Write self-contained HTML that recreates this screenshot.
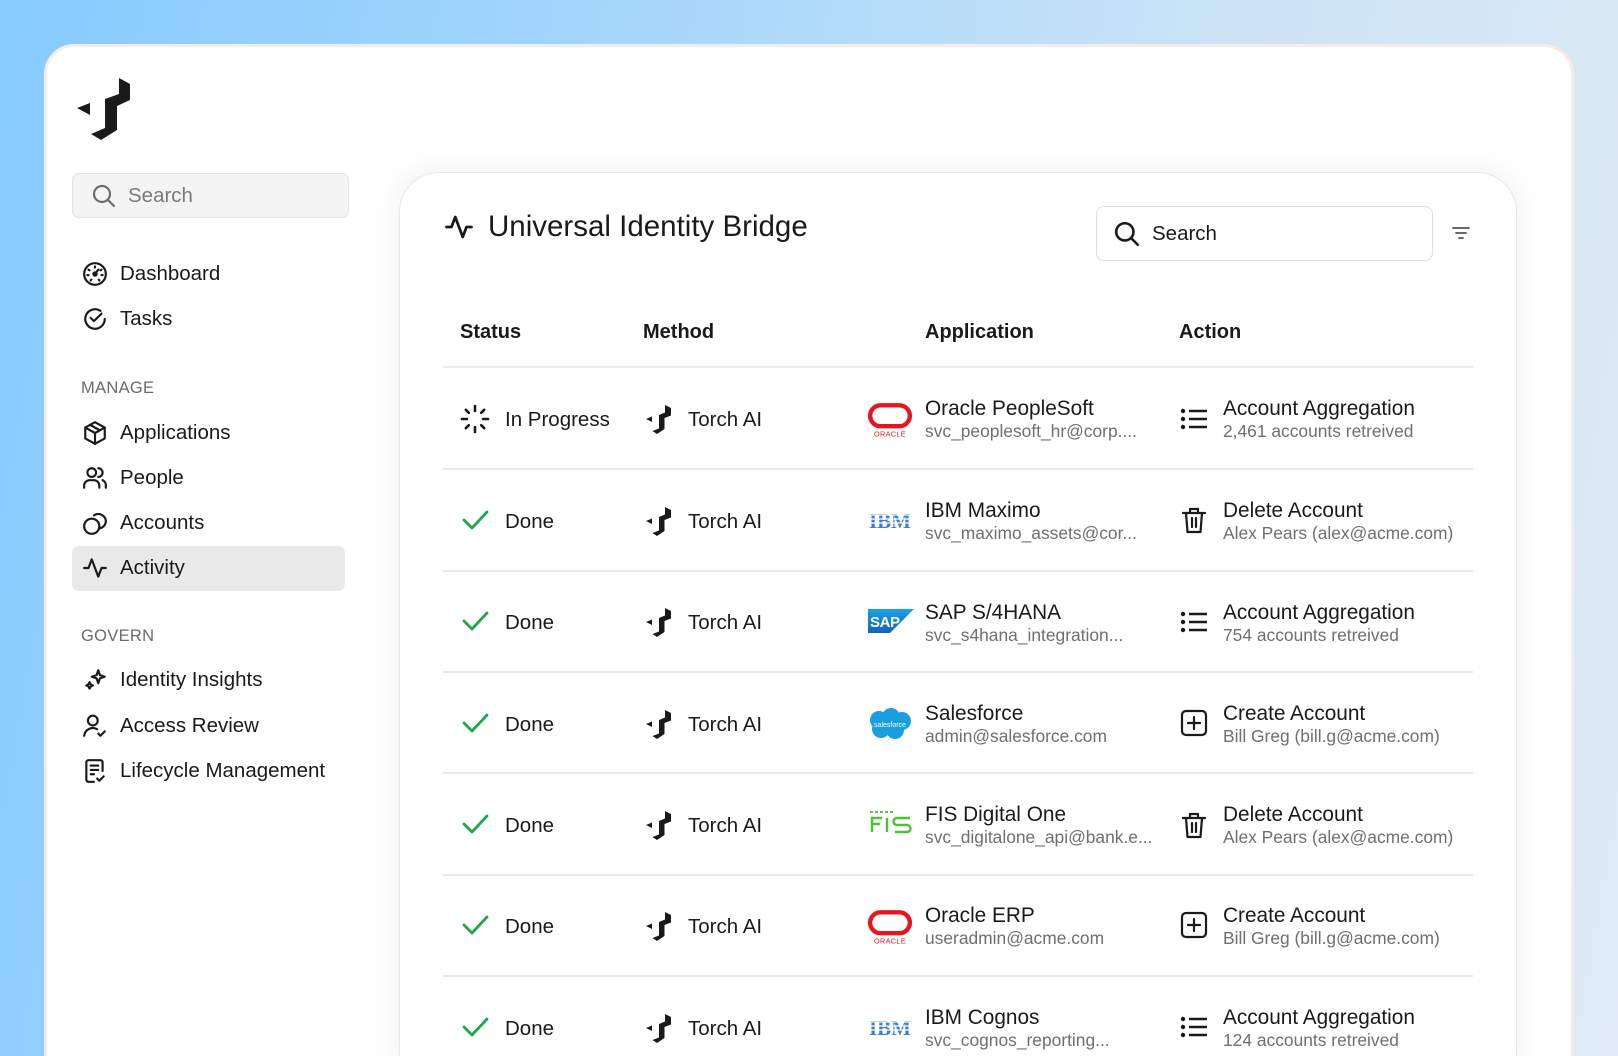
<!DOCTYPE html>
<html><head><meta charset="utf-8">
<style>
*{margin:0;padding:0;box-sizing:border-box}
html,body{width:1618px;height:1056px;overflow:hidden}
body{font-family:"Liberation Sans",sans-serif;color:#1a1a1a;position:relative;
background:linear-gradient(100deg,#86cbff 0%,#a5d6fb 35%,#cde4f6 70%,#dfeaf4 100%);}
.card{position:absolute;left:44px;top:44px;width:1530px;height:1012px;background:#fff;border:3px solid #f5ebe7;border-bottom:none;border-radius:30px 30px 0 0}
.abs{position:absolute}
.nav{position:absolute;left:82px;display:flex;align-items:center;font-size:20.5px;height:30px}
.nav svg{width:26px;height:26px;margin-right:12px;fill:none;stroke:#1a1a1a;stroke-width:2;stroke-linecap:round;stroke-linejoin:round}
.sec{position:absolute;left:81px;font-size:16.5px;color:#6b6b6b;letter-spacing:.3px}
.panel{position:absolute;left:399px;top:172px;width:1118px;height:884px;background:#fff;border:1px solid #e8e8e8;border-bottom:none;border-radius:40px 40px 0 0;box-shadow:0 0 22px 10px rgba(0,0,0,.035)}
.hdr{position:absolute;top:321px;font-size:20px;font-weight:bold}
.div{position:absolute;left:443px;width:1030px;height:2px;background:#e9e9e9}
.cell{position:absolute;display:flex;align-items:center;font-size:20.5px}
.two{position:absolute;line-height:1}
.two .a{font-size:20.8px;color:#1a1a1a}
.two .b{font-size:17.4px;color:#6f6f6f;margin-top:3px}
.ic{fill:none;stroke:#1a1a1a;stroke-width:2.2;stroke-linecap:round;stroke-linejoin:round}
</style></head><body>
<div class="card"></div>
<svg class="abs" style="left:77px;top:78px" width="54" height="63" viewBox="0 0 54 63"><polygon fill="#1a1a1a" points="0,30 13,25 13,37"/><polygon fill="#1a1a1a" points="42,0 53,6 53,22 40,28 40,52 24,62 14,56 28,50 28,21 42,16"/></svg>
<div class="abs" style="left:72px;top:173px;width:277px;height:45px;background:#f4f4f4;border:1px solid #e3e3e3;border-radius:7px"></div>
<svg class="abs" style="left:91px;top:183px" width="26" height="26" viewBox="0 0 26 26"><circle cx="11" cy="11" r="8" fill="none" stroke="#6e6e6e" stroke-width="2.2"/><path d="M17 17l6 6" stroke="#6e6e6e" stroke-width="2.2" stroke-linecap="round"/></svg>
<div class="abs" style="left:128px;top:184px;font-size:20.5px;color:#7a7a7a">Search</div>

<div class="nav" style="top:259px"><svg viewBox="0 0 24 24"><circle cx="12" cy="12" r="10"/><path d="M12 12l3-4M12 5v1M6 8l1 .6M18 8l-1 .6M5 13h1M18 13h1M8 18l.6-.8M16 18l-.6-.8"/><circle cx="12" cy="12" r="1.5" fill="#1a1a1a"/></svg>Dashboard</div>
<div class="nav" style="top:304px"><svg viewBox="0 0 24 24"><path d="M21 12a9 9 0 1 1-4-7.5"/><path d="M8 11l3 3 7-7"/></svg>Tasks</div>
<div class="sec" style="top:379px">MANAGE</div>
<div class="nav" style="top:418px"><svg viewBox="0 0 24 24"><path d="M12 2l9 5v10l-9 5-9-5V7z"/><path d="M3 7l9 5 9-5M12 12v10M7.5 4.5l9 5"/></svg>Applications</div>
<div class="nav" style="top:463px"><svg viewBox="0 0 24 24"><circle cx="9" cy="7" r="4"/><path d="M2 21v-2a5 5 0 0 1 5-5h4a5 5 0 0 1 5 5v2M15 3a4 4 0 0 1 0 8M19 14a5 5 0 0 1 3 5v2"/></svg>People</div>
<div class="nav" style="top:508px"><svg viewBox="0 0 24 24"><circle cx="9" cy="15" r="7"/><path d="M11 5a7 7 0 0 1 11 6 7 7 0 0 1-6 6"/></svg>Accounts</div>
<div class="abs" style="left:72px;top:546px;width:273px;height:45px;background:#e9e9e9;border-radius:7px"></div>
<div class="nav" style="top:553px"><svg viewBox="0 0 24 24"><path d="M2 12h4l3-8 6 16 3-8h4"/></svg>Activity</div>
<div class="sec" style="top:627px">GOVERN</div>
<div class="nav" style="top:665px"><svg viewBox="0 0 24 24"><path d="M15 3l1.5 4.5L21 9l-4.5 1.5L15 15l-1.5-4.5L9 9l4.5-1.5z"/><path d="M7 14l1 2 2 1-2 1-1 2-1-2-2-1 2-1z"/></svg>Identity Insights</div>
<div class="nav" style="top:711px"><svg viewBox="0 0 24 24"><circle cx="10" cy="7" r="4.5"/><path d="M2 21a8 8 0 0 1 12-6M15 19l2 2 4-4"/></svg>Access Review</div>
<div class="nav" style="top:756px"><svg viewBox="0 0 24 24"><path d="M19 12V4a2 2 0 0 0-2-2H6a2 2 0 0 0-2 2v16a2 2 0 0 0 2 2h5"/><path d="M8 7h7M8 11h7M8 15h3M14 19l2 2 4-4"/></svg>Lifecycle Management</div>

<div class="panel"></div>
<svg class="abs" style="left:443px;top:212px" width="32" height="30" viewBox="0 0 24 24"><path class="ic" d="M2 12h4l3-8 6 16 3-8h4"/></svg>
<div class="abs" style="left:488px;top:210px;font-size:29.5px;color:#1a1a1a">Universal Identity Bridge</div>
<div class="abs" style="left:1096px;top:206px;width:337px;height:55px;border:1px solid #dedede;border-radius:8px"></div>
<svg class="abs" style="left:1113px;top:220px" width="28" height="28" viewBox="0 0 26 26"><circle cx="11" cy="11" r="8" fill="none" stroke="#1a1a1a" stroke-width="2.4"/><path d="M17 17l6 6" stroke="#1a1a1a" stroke-width="2.4" stroke-linecap="round"/></svg>
<div class="abs" style="left:1152px;top:222px;font-size:20.5px">Search</div>
<svg class="abs" style="left:1451px;top:224px" width="20" height="18" viewBox="0 0 20 18"><path d="M2 4h16M5 9h10M8 14h4" stroke="#555" stroke-width="1.8" stroke-linecap="round"/></svg>

<div class="hdr" style="left:460px">Status</div>
<div class="hdr" style="left:643px">Method</div>
<div class="hdr" style="left:925px">Application</div>
<div class="hdr" style="left:1179px">Action</div>
<div class="div" style="top:366px"></div>
<div class="div" style="top:468px"></div>
<div class="div" style="top:570px"></div>
<div class="div" style="top:671px"></div>
<div class="div" style="top:772px"></div>
<div class="div" style="top:874px"></div>
<div class="div" style="top:975px"></div>

<svg width="0" height="0" style="position:absolute"><defs>
<g id="torch"><polygon fill="#1a1a1a" points="0,14 6,11.5 6,17"/><polygon fill="#1a1a1a" points="19,0 25,3 25,10.5 18.5,13 18.5,24 11,29 6.5,26 13,23.5 13,10 19,7.5"/></g>
<g id="check"><path d="M2 13l8 8L25 5" fill="none" stroke="#1fa84a" stroke-width="2.8" stroke-linecap="round" stroke-linejoin="round"/></g>
<g id="list"><circle cx="3" cy="5" r="2.2" fill="#1a1a1a"/><circle cx="3" cy="13" r="2.2" fill="#1a1a1a"/><circle cx="3" cy="21" r="2.2" fill="#1a1a1a"/><path d="M9 5h18M9 13h18M9 21h18" stroke="#1a1a1a" stroke-width="2.6"/></g>
<g id="trash"><path class="ic" d="M3 7h22M10 7V3h8v4M6 7l1.5 19h13L22 7M12 12v9M16 12v9"/></g>
<g id="plus"><rect x="2" y="2" width="24" height="24" rx="4" class="ic"/><path class="ic" d="M14 8v12M8 14h12"/></g>
<g id="oracle"><rect x="3" y="2" width="38" height="20" rx="10" fill="none" stroke="#e5161f" stroke-width="4.2"/><text x="22" y="32" font-size="7" fill="#e5161f" text-anchor="middle" font-family="Liberation Sans" letter-spacing=".3">ORACLE</text></g>
<g id="ibm"><text x="22" y="22" font-size="21" font-weight="bold" fill="#3a7fd0" text-anchor="middle" font-family="Liberation Serif" textLength="42">IBM</text><path d="M0 9h44M0 13h44M0 17h44" stroke="#fff" stroke-width="1.3"/></g>
</defs></svg>

<svg class="abs" style="left:460px;top:404px" width="30" height="30" viewBox="0 0 30 30"><g stroke="#1a1a1a" stroke-width="2.6" stroke-linecap="round"><path d="M15 2v5M15 23v5M2 15h5M23 15h5M5.8 5.8l3 3M21.2 21.2l3 3M5.8 24.2l3-3M24.2 5.8l-3 3"/></g></svg>
<div class="cell" style="left:505px;top:408px">In Progress</div>
<svg class="abs" style="left:646px;top:405px" width="26" height="30" viewBox="0 0 26 30"><use href="#torch"/></svg>
<div class="cell" style="left:688px;top:408px">Torch AI</div>
<svg class="abs" style="left:867px;top:403px" width="46" height="36" viewBox="0 0 44 34"><use href="#oracle"/></svg>
<div class="two" style="left:925px;top:399px"><div class="a">Oracle PeopleSoft</div><div class="b">svc_peoplesoft_hr@corp....</div></div>
<svg class="abs" style="left:1180px;top:406px" width="28" height="26" viewBox="0 0 28 26"><use href="#list"/></svg>
<div class="two" style="left:1223px;top:399px"><div class="a">Account Aggregation</div><div class="b">2,461 accounts retreived</div></div>

<svg class="abs" style="left:462px;top:507px" width="28" height="26" viewBox="0 0 28 26"><use href="#check"/></svg>
<div class="cell" style="left:505px;top:510px">Done</div>
<svg class="abs" style="left:646px;top:507px" width="26" height="30" viewBox="0 0 26 30"><use href="#torch"/></svg>
<div class="cell" style="left:688px;top:510px">Torch AI</div>
<svg class="abs" style="left:868px;top:506px" width="44" height="24" viewBox="0 0 44 24"><use href="#ibm"/></svg>
<div class="two" style="left:925px;top:501px"><div class="a">IBM Maximo</div><div class="b">svc_maximo_assets@cor...</div></div>
<svg class="abs" style="left:1180px;top:505px" width="28" height="30" viewBox="0 0 28 28"><use href="#trash"/></svg>
<div class="two" style="left:1223px;top:501px"><div class="a">Delete Account</div><div class="b">Alex Pears (alex@acme.com)</div></div>

<svg class="abs" style="left:462px;top:608px" width="28" height="26" viewBox="0 0 28 26"><use href="#check"/></svg>
<div class="cell" style="left:505px;top:611px">Done</div>
<svg class="abs" style="left:646px;top:608px" width="26" height="30" viewBox="0 0 26 30"><use href="#torch"/></svg>
<div class="cell" style="left:688px;top:611px">Torch AI</div>
<svg class="abs" style="left:868px;top:609px" width="46" height="24" viewBox="0 0 46 24"><defs><linearGradient id="sg" x1="0" y1="0" x2="0" y2="1"><stop offset="0" stop-color="#1aa3e8"/><stop offset="1" stop-color="#1263b8"/></linearGradient></defs><polygon points="0,0 46,0 22,24 0,24" fill="url(#sg)"/><text x="2" y="18" font-size="15" font-weight="bold" fill="#fff" font-family="Liberation Sans" textLength="30">SAP</text></svg>
<div class="two" style="left:925px;top:603px"><div class="a">SAP S/4HANA</div><div class="b">svc_s4hana_integration...</div></div>
<svg class="abs" style="left:1180px;top:609px" width="28" height="26" viewBox="0 0 28 26"><use href="#list"/></svg>
<div class="two" style="left:1223px;top:603px"><div class="a">Account Aggregation</div><div class="b">754 accounts retreived</div></div>

<svg class="abs" style="left:462px;top:710px" width="28" height="26" viewBox="0 0 28 26"><use href="#check"/></svg>
<div class="cell" style="left:505px;top:713px">Done</div>
<svg class="abs" style="left:646px;top:710px" width="26" height="30" viewBox="0 0 26 30"><use href="#torch"/></svg>
<div class="cell" style="left:688px;top:713px">Torch AI</div>
<svg class="abs" style="left:867px;top:708px" width="46" height="32" viewBox="0 0 46 32"><g fill="#1a9ee0"><circle cx="12" cy="12" r="9"/><circle cx="24" cy="9" r="9"/><circle cx="35" cy="13" r="9"/><circle cx="28" cy="22" r="9"/><circle cx="14" cy="21" r="9"/></g><text x="23" y="19" font-size="7" fill="#fff" text-anchor="middle" font-family="Liberation Sans">salesforce</text></svg>
<div class="two" style="left:925px;top:704px"><div class="a">Salesforce</div><div class="b">admin@salesforce.com</div></div>
<svg class="abs" style="left:1180px;top:709px" width="28" height="28" viewBox="0 0 28 28"><use href="#plus"/></svg>
<div class="two" style="left:1223px;top:704px"><div class="a">Create Account</div><div class="b">Bill Greg (bill.g@acme.com)</div></div>

<svg class="abs" style="left:462px;top:811px" width="28" height="26" viewBox="0 0 28 26"><use href="#check"/></svg>
<div class="cell" style="left:505px;top:814px">Done</div>
<svg class="abs" style="left:646px;top:811px" width="26" height="30" viewBox="0 0 26 30"><use href="#torch"/></svg>
<div class="cell" style="left:688px;top:814px">Torch AI</div>
<svg class="abs" style="left:868px;top:810px" width="46" height="24" viewBox="0 0 46 24"><g fill="#5fc44a"><rect x="2" y="1" width="3" height="2"/><rect x="7" y="1" width="3" height="2"/><rect x="12" y="1" width="3" height="2"/><rect x="17" y="1" width="3" height="2"/><rect x="22" y="1" width="3" height="2"/></g><g fill="none" stroke="#4cc23a" stroke-width="2.4"><path d="M14 8H4v14M4 14h8M19 8v14M42 8H29a3 3 0 0 0 0 7h10a3.5 3.5 0 0 1 0 7H27"/></g></svg>
<div class="two" style="left:925px;top:805px"><div class="a">FIS Digital One</div><div class="b">svc_digitalone_api@bank.e...</div></div>
<svg class="abs" style="left:1180px;top:810px" width="28" height="30" viewBox="0 0 28 28"><use href="#trash"/></svg>
<div class="two" style="left:1223px;top:805px"><div class="a">Delete Account</div><div class="b">Alex Pears (alex@acme.com)</div></div>

<svg class="abs" style="left:462px;top:912px" width="28" height="26" viewBox="0 0 28 26"><use href="#check"/></svg>
<div class="cell" style="left:505px;top:915px">Done</div>
<svg class="abs" style="left:646px;top:912px" width="26" height="30" viewBox="0 0 26 30"><use href="#torch"/></svg>
<div class="cell" style="left:688px;top:915px">Torch AI</div>
<svg class="abs" style="left:867px;top:910px" width="46" height="36" viewBox="0 0 44 34"><use href="#oracle"/></svg>
<div class="two" style="left:925px;top:906px"><div class="a">Oracle ERP</div><div class="b">useradmin@acme.com</div></div>
<svg class="abs" style="left:1180px;top:911px" width="28" height="28" viewBox="0 0 28 28"><use href="#plus"/></svg>
<div class="two" style="left:1223px;top:906px"><div class="a">Create Account</div><div class="b">Bill Greg (bill.g@acme.com)</div></div>

<svg class="abs" style="left:462px;top:1014px" width="28" height="26" viewBox="0 0 28 26"><use href="#check"/></svg>
<div class="cell" style="left:505px;top:1017px">Done</div>
<svg class="abs" style="left:646px;top:1014px" width="26" height="30" viewBox="0 0 26 30"><use href="#torch"/></svg>
<div class="cell" style="left:688px;top:1017px">Torch AI</div>
<svg class="abs" style="left:868px;top:1013px" width="44" height="24" viewBox="0 0 44 24"><use href="#ibm"/></svg>
<div class="two" style="left:925px;top:1008px"><div class="a">IBM Cognos</div><div class="b">svc_cognos_reporting...</div></div>
<svg class="abs" style="left:1180px;top:1014px" width="28" height="26" viewBox="0 0 28 26"><use href="#list"/></svg>
<div class="two" style="left:1223px;top:1008px"><div class="a">Account Aggregation</div><div class="b">124 accounts retreived</div></div>
</body></html>
